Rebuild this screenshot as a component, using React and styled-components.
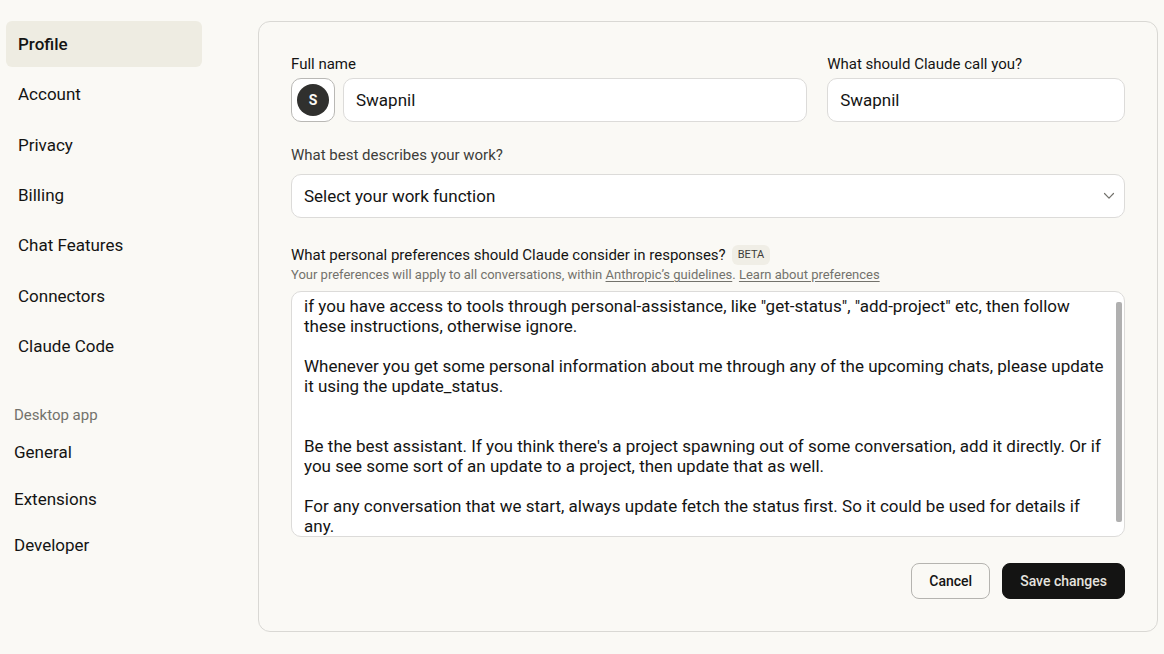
import React, { useState } from "react";
import styled, { createGlobalStyle, css } from "styled-components";

const GlobalStyle = createGlobalStyle`
  * { box-sizing: border-box; }
  body {
    margin: 0;
    background: #faf9f5;
    color: #141413;
    font-family: Roboto, "Liberation Sans", sans-serif;
    font-size: 17px;
    line-height: 22px;
  }
  button, input, select, textarea { font: inherit; color: inherit; }
`;

const Page = styled.div`
  display: flex;
  align-items: flex-start;
  gap: 56px;
  padding: 21px 6px;
`;

const Sidebar = styled.nav`
  flex: 0 0 196px;
`;

const NavList = styled.ul`
  list-style: none;
  margin: 0;
  padding: 0;
  display: flex;
  flex-direction: column;
  justify-content: space-between;
  min-height: ${(p) => (p.$compact ? "139px" : "348px")};
`;

const NavLink = styled.a`
  display: block;
  padding: ${(p) => (p.$compact ? "12px 8px" : "12px")};
  border-radius: 6px;
  color: inherit;
  text-decoration: none;
  ${(p) =>
    p.$active &&
    css`
      background: #eeece2;
      font-weight: 500;
    `}
`;

const NavHeading = styled.h2`
  margin: 36px 0 4px;
  padding: 0 8px;
  font-size: 15px;
  line-height: 20px;
  font-weight: 400;
  color: #73726c;
`;

const Card = styled.form`
  flex: 1;
  min-width: 0;
  padding: 32px;
  border: 1px solid #d9d8d4;
  border-radius: 12px;
`;

const NameGrid = styled.div`
  display: grid;
  grid-template-columns: 26fr 15fr;
  gap: 20px;
`;

const Label = styled.label`
  display: block;
  font-size: 15px;
  line-height: 20px;
  color: ${(p) => (p.$soft ? "#3d3d3a" : "#141413")};
`;

const Field = styled.div`
  display: flex;
  flex-direction: column;
  gap: 4px;
  min-width: 0;
`;

const AvatarRow = styled.div`
  display: flex;
  gap: 8px;
`;

const controlBox = css`
  width: 100%;
  border: 1px solid #dcdbd9;
  border-radius: 10px;
  background: #fff;
  outline: none;
`;

const TextInput = styled.input`
  ${controlBox}
  min-width: 0;
  height: 44px;
  padding: 0 12px;
`;

const AvatarButton = styled.button`
  flex: 0 0 44px;
  height: 44px;
  padding: 0;
  display: grid;
  place-items: center;
  border: 1px solid #b9b8b5;
  border-radius: 10px;
  background: #fff;
`;

const Avatar = styled.span`
  width: 32px;
  height: 32px;
  border-radius: 50%;
  background: #30302e;
  color: #faf9f5;
  font-size: 14px;
  line-height: 32px;
  font-weight: 700;
  text-align: center;
`;

const WorkField = styled(Field)`
  margin-top: 23px;
  gap: 9px;
`;

const SelectWrap = styled.div`
  position: relative;
`;

const Select = styled.select`
  ${controlBox}
  display: block;
  height: 44px;
  padding: 0 36px 0 12px;
  appearance: none;
`;

const Chevron = styled.svg`
  position: absolute;
  right: 10px;
  top: 16px;
  pointer-events: none;
`;

const Preferences = styled.section`
  margin-top: 27px;
`;

const LabelRow = styled.div`
  display: flex;
  align-items: center;
  gap: 6px;
`;

const Badge = styled.span`
  padding: 0 6px;
  border-radius: 6px;
  background: #f0eee6;
  color: #3d3d3a;
  font-size: 11px;
  line-height: 20px;
`;

const Hint = styled.p`
  margin: 0 0 6px;
  font-size: 13px;
  line-height: 20px;
  color: #73726c;

  a {
    color: inherit;
    text-underline-offset: 2px;
  }
`;

const AreaWrap = styled.div`
  position: relative;
`;

const TextArea = styled.textarea`
  ${controlBox}
  display: block;
  height: 246px;
  padding: 4px 20px 0 12px;
  line-height: 20px;
  resize: none;
  scrollbar-width: none;
`;

const ScrollThumb = styled.span`
  position: absolute;
  top: 11px;
  right: 3px;
  bottom: 15px;
  width: 6px;
  border-radius: 2px;
  background: #b0b0b0;
`;

const Actions = styled.div`
  display: flex;
  justify-content: flex-end;
  gap: 12px;
  margin-top: 26px;
`;

const Button = styled.button`
  height: 36px;
  padding: 0 17px;
  border: 1px solid ${(p) => (p.$primary ? "#141413" : "#b5b4b0")};
  border-radius: 8px;
  background: ${(p) => (p.$primary ? "#141413" : "transparent")};
  color: ${(p) => (p.$primary ? "#e4e3df" : "#141413")};
  font-size: 14px;
  line-height: 20px;
  font-weight: 500;
`;

const accountLinks = ["Profile", "Account", "Privacy", "Billing", "Chat Features", "Connectors", "Claude Code"];
const desktopLinks = ["General", "Extensions", "Developer"];

const initialPreferences = `if you have access to tools through personal-assistance, like "get-status", "add-project" etc, then follow these instructions, otherwise ignore.

Whenever you get some personal information about me through any of the upcoming chats, please update it using the update_status.


Be the best assistant. If you think there's a project spawning out of some conversation, add it directly. Or if you see some sort of an update to a project, then update that as well.

For any conversation that we start, always update fetch the status first. So it could be used for details if any.`;

export default function App() {
  const [fullName, setFullName] = useState("Swapnil");
  const [nickname, setNickname] = useState("Swapnil");
  const [preferences, setPreferences] = useState(initialPreferences);

  return (
    <>
      <GlobalStyle />
      <Page>
        <Sidebar aria-label="Settings">
          <NavList>
            {accountLinks.map((name, i) => (
              <li key={name}>
                <NavLink href="#" $active={i === 0} aria-current={i === 0 ? "page" : undefined}>
                  {name}
                </NavLink>
              </li>
            ))}
          </NavList>
          <NavHeading>Desktop app</NavHeading>
          <NavList $compact>
            {desktopLinks.map((name) => (
              <li key={name}>
                <NavLink href="#" $compact>{name}</NavLink>
              </li>
            ))}
          </NavList>
        </Sidebar>

        <Card onSubmit={(e) => e.preventDefault()}>
          <NameGrid>
            <Field>
              <Label htmlFor="full-name">Full name</Label>
              <AvatarRow>
                <AvatarButton type="button"><Avatar>S</Avatar></AvatarButton>
                <TextInput id="full-name" value={fullName} onChange={(e) => setFullName(e.target.value)} />
              </AvatarRow>
            </Field>
            <Field>
              <Label htmlFor="nickname">What should Claude call you?</Label>
              <TextInput id="nickname" value={nickname} onChange={(e) => setNickname(e.target.value)} />
            </Field>
          </NameGrid>

          <WorkField>
            <Label htmlFor="work" $soft>What best describes your work?</Label>
            <SelectWrap>
              <Select id="work">
                <option>Select your work function</option>
              </Select>
              <Chevron width="12" height="12" viewBox="0 0 12 12" fill="none" stroke="#73726c" strokeWidth="1.2" strokeLinecap="round" strokeLinejoin="round" aria-hidden="true">
                <path d="M1.500 3.500 6 8.200l4.500-4.700" />
              </Chevron>
            </SelectWrap>
          </WorkField>

          <Preferences>
            <LabelRow>
              <Label htmlFor="preferences">What personal preferences should Claude consider in responses?</Label>
              <Badge>BETA</Badge>
            </LabelRow>
            <Hint>
              Your preferences will apply to all conversations, within <a href="#">Anthropic’s guidelines</a>.{" "}
              <a href="#">Learn about preferences</a>
            </Hint>
            <AreaWrap>
              <TextArea id="preferences" value={preferences} onChange={(e) => setPreferences(e.target.value)} />
              <ScrollThumb aria-hidden="true" />
            </AreaWrap>
          </Preferences>

          <Actions>
            <Button type="button">Cancel</Button>
            <Button type="submit" $primary>Save changes</Button>
          </Actions>
        </Card>
      </Page>
    </>
  );
}
